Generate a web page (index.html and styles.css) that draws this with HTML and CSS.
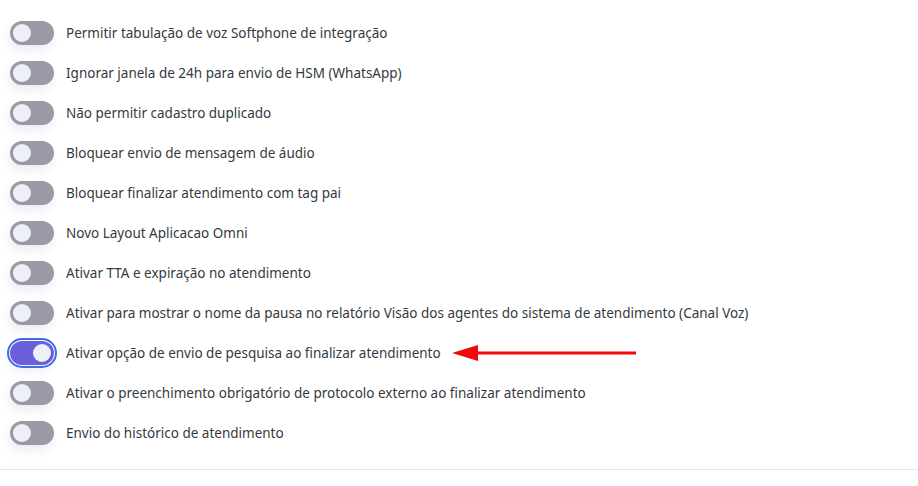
FILE: index.html
```html
<!DOCTYPE html>
<html lang="pt-BR">
<head>
<meta charset="utf-8">
<link rel="stylesheet" href="styles.css">
</head>
<body>
<div class="settings">
  <ul class="list">
    <li class="row"><span class="toggle"><span class="knob"></span></span><span class="label">Permitir tabulação de voz Softphone de integração</span></li>
    <li class="row"><span class="toggle"><span class="knob"></span></span><span class="label">Ignorar janela de 24h para envio de HSM (WhatsApp)</span></li>
    <li class="row"><span class="toggle"><span class="knob"></span></span><span class="label">Não permitir cadastro duplicado</span></li>
    <li class="row"><span class="toggle"><span class="knob"></span></span><span class="label">Bloquear envio de mensagem de áudio</span></li>
    <li class="row"><span class="toggle"><span class="knob"></span></span><span class="label">Bloquear finalizar atendimento com tag pai</span></li>
    <li class="row"><span class="toggle"><span class="knob"></span></span><span class="label">Novo Layout Aplicacao Omni</span></li>
    <li class="row"><span class="toggle"><span class="knob"></span></span><span class="label">Ativar TTA e expiração no atendimento</span></li>
    <li class="row"><span class="toggle"><span class="knob"></span></span><span class="label">Ativar para mostrar o nome da pausa no relatório Visão dos agentes do sistema de atendimento (Canal Voz)</span></li>
    <li class="row"><span class="toggle on"><span class="knob"></span></span><span class="label">Ativar opção de envio de pesquisa ao finalizar atendimento</span>
      <svg class="arrow" width="186" height="20" viewBox="0 0 186 20"><line x1="20" y1="10" x2="184" y2="10" stroke="#f2070b" stroke-width="3"/><polygon points="0,10 26,2 26,18" fill="#f2070b"/></svg>
    </li>
    <li class="row"><span class="toggle"><span class="knob"></span></span><span class="label">Ativar o preenchimento obrigatório de protocolo externo ao finalizar atendimento</span></li>
    <li class="row"><span class="toggle"><span class="knob"></span></span><span class="label">Envio do histórico de atendimento</span></li>
  </ul>
  <div class="divider"></div>
</div>
</body>
</html>
```
FILE: styles.css
```css
html, body {
  margin: 0;
  padding: 0;
  background: #ffffff;
}
body {
  font-family: "Noto Sans", "Open Sans", sans-serif;
  font-size: 13.5px;
  color: #343a40;
}
.list {
  list-style: none;
  margin: 0;
  padding: 13px 0 16px 0;
}
.row {
  display: flex;
  align-items: center;
  height: 40px;
  padding-left: 10px;
}
.toggle {
  position: relative;
  flex: none;
  width: 44px;
  height: 24px;
  border-radius: 12px;
  background: #9a9aa7;
  box-shadow: -2px 6px 10px rgba(120, 110, 150, 0.12);
  display: flex;
  align-items: center;
  padding: 0 3px;
  box-sizing: border-box;
}
.knob {
  width: 18px;
  height: 18px;
  border-radius: 50%;
  background: #eef0f7;
}
.toggle.on {
  background: #6c5fda;
  justify-content: flex-end;
  outline: 2px solid #3b6ee8;
  outline-offset: 1px;
}
.label {
  margin-left: 12px;
  white-space: nowrap;
}
.arrow {
  margin-left: 11px;
  flex: none;
}
.divider {
  height: 1px;
  background: #e6e4ec;
}
```
